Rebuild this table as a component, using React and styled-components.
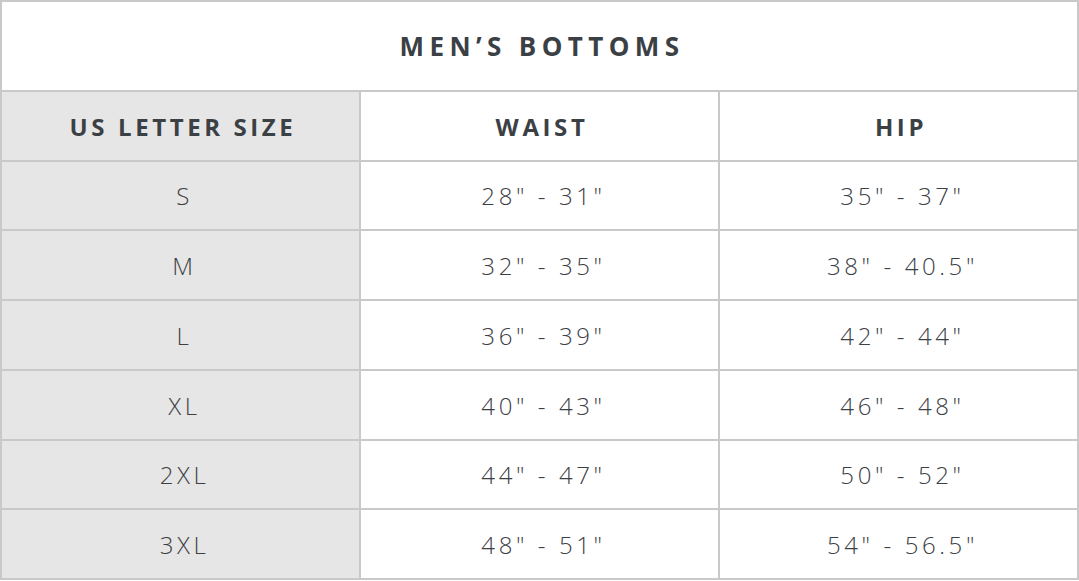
import React from "react";
import styled, { createGlobalStyle } from "styled-components";

const GlobalStyle = createGlobalStyle`
  body {
    margin: 0;
    background: #fff;
    font-family: "Open Sans", "Liberation Sans", sans-serif;
  }
`;

const rows = [
  { size: "S", waist: '28" - 31"', hip: '35" - 37"' },
  { size: "M", waist: '32" - 35"', hip: '38" - 40.5"' },
  { size: "L", waist: '36" - 39"', hip: '42" - 44"' },
  { size: "XL", waist: '40" - 43"', hip: '46" - 48"' },
  { size: "2XL", waist: '44" - 47"', hip: '50" - 52"' },
  { size: "3XL", waist: '48" - 51"', hip: '54" - 56.5"' },
];

const App = () => {
  return (
    <>
      <GlobalStyle />
      <Chart>
        <Title>MEN’S BOTTOMS</Title>
        <HeadCell $shaded>US LETTER SIZE</HeadCell>
        <HeadCell>WAIST</HeadCell>
        <HeadCell>HIP</HeadCell>
        {rows.map((r) => (
          <React.Fragment key={r.size}>
            <Cell $shaded>{r.size}</Cell>
            <Cell>{r.waist}</Cell>
            <Cell>{r.hip}</Cell>
          </React.Fragment>
        ))}
      </Chart>
    </>
  );
};

export default App;

const Chart = styled.div`
  display: grid;
  grid-template-columns: repeat(3, 1fr);
  grid-template-rows: 88px 68px 67px 68px 68px 68px 67px 68px;
  gap: 2px;
  padding: 2px;
  width: 1079px;
  box-sizing: border-box;
  background: #c9c9c9;
`;

const Title = styled.div`
  grid-column: 1 / 4;
  display: flex;
  align-items: center;
  justify-content: center;
  padding-left: 5px;
  background: #fff;
  color: #3b4045;
  font-size: 26px;
  font-weight: 700;
  letter-spacing: 5.4px;
`;

const Cell = styled.div`
  display: flex;
  align-items: center;
  justify-content: center;
  padding-left: 8px;
  background: ${(p) => (p.$shaded ? "#e6e6e6" : "#fff")};
  color: #3b4045;
  font-size: 24px;
  font-weight: 300;
  letter-spacing: 3.6px;
`;

const HeadCell = styled(Cell)`
  padding-left: 5px;
  font-weight: 700;
  letter-spacing: 3.6px;
`;
